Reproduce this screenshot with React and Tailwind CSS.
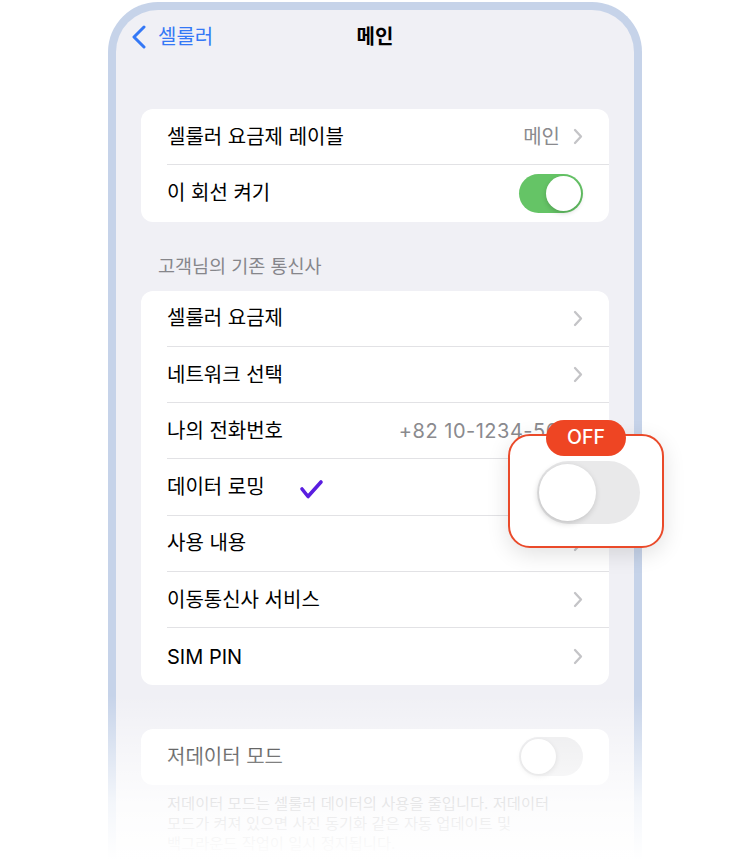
import React from "react";

function Chevron() {
  return (
    <svg width="10" height="17" viewBox="0 0 10 17" className="shrink-0">
      <path d="M2 2 L8 8.5 L2 15" fill="none" stroke="#c4c4c7" strokeWidth="2.3" strokeLinecap="round" strokeLinejoin="round" />
    </svg>
  );
}

function Row({ label, right, last }) {
  return (
    <div className="pl-[26px]">
      <div className={"flex h-[56.3px] items-center justify-between pr-[26px] " + (last ? "" : "border-b border-[#e2e2e5]")}>
        <span className="text-[20px] text-black">{label}</span>
        {right}
      </div>
    </div>
  );
}

function Toggle({ on }) {
  return (
    <div className={"relative h-[39px] w-[64px] rounded-full " + (on ? "bg-[#65c466]" : "bg-[#e9e9eb]")}>
      <div
        className={
          "absolute top-[2px] h-[35px] w-[35px] rounded-full bg-white shadow-[0_2px_5px_rgba(0,0,0,0.18)] " +
          (on ? "right-[2px]" : "left-[2px]")
        }
      />
    </div>
  );
}

export default function App() {
  return (
    <div className="relative h-[860px] w-[750px] overflow-hidden bg-white font-['Inter','Noto_Sans_CJK_KR',sans-serif]">
      {/* phone frame */}
      <div className="ml-[108px] mt-[2px] h-[880px] w-[534px] rounded-t-[50px] border-[8px] border-b-0 border-[#c6d3e9] bg-[#f0f0f5]">
        {/* nav */}
        <div className="relative flex h-[54px] items-center px-[16px]">
          <div className="flex items-center gap-[12px]">
            <svg width="14" height="24" viewBox="0 0 14 24">
              <path d="M12 2 L2 12 L12 22" fill="none" stroke="#3478f6" strokeWidth="3" strokeLinecap="round" strokeLinejoin="round" />
            </svg>
            <span className="text-[20px] text-[#3478f6]">셀룰러</span>
          </div>
          <div className="absolute inset-x-0 top-0 flex h-[54px] items-center justify-center">
            <span className="text-[20px] font-semibold text-black">메인</span>
          </div>
        </div>

        <div className="px-[25px]">
          {/* card 1 */}
          <div className="mt-[45px] overflow-hidden rounded-[12px] bg-white">
            <Row
              label="셀룰러 요금제 레이블"
              right={
                <div className="flex items-center gap-[13px]">
                  <span className="text-[20px] text-[#8a8a8e]">메인</span>
                  <Chevron />
                </div>
              }
            />
            <Row label="이 회선 켜기" right={<Toggle on />} last />
          </div>

          {/* section header */}
          <div className="pl-[17px] pt-[32px] pb-[13px] text-[18.5px] leading-[24px] text-[#86868b]">고객님의 기존 통신사</div>

          {/* card 2 */}
          <div className="overflow-hidden rounded-[12px] bg-white">
            <Row label="셀룰러 요금제" right={<Chevron />} />
            <Row label="네트워크 선택" right={<Chevron />} />
            <Row label="나의 전화번호" right={<span className="text-[20px] tracking-[0.5px] text-[#8a8a8e]">+82 10-1234-5678</span>} />
            <Row label="데이터 로밍" right={<Toggle />} />
            <Row label="사용 내용" right={<Chevron />} />
            <Row label="이동통신사 서비스" right={<Chevron />} />
            <Row label="SIM PIN" right={<Chevron />} last />
          </div>

          {/* card 3 */}
          <div className="mt-[44px] overflow-hidden rounded-[12px] bg-white">
            <Row label="저데이터 모드" right={<Toggle />} last />
          </div>
          <p className="mt-[9px] px-[26px] text-[15.3px] leading-[20px] text-[#86868b]">
            저데이터 모드는 셀룰러 데이터의 사용을 줄입니다. 저데이터
            <br />
            모드가 켜져 있으면 사진 동기화 같은 자동 업데이트 및
            <br />
            백그라운드 작업이 일시 정지됩니다.
          </p>
        </div>
      </div>

      {/* bottom fade */}
      <div className="pointer-events-none absolute inset-x-0 top-[695px] h-[165px] bg-linear-to-b from-white/0 via-white/80 via-65% to-white" />

      {/* check mark */}
      <svg className="absolute left-[299px] top-[479px]" width="25" height="21" viewBox="0 0 25 21">
        <path d="M3 10 L9 17.5 L22 3" fill="none" stroke="#5a1ee0" strokeWidth="3.6" strokeLinecap="round" strokeLinejoin="round" />
      </svg>

      {/* callout */}
      <div className="absolute left-[508px] top-[434px] h-[114px] w-[156px] rounded-[22px] border-2 border-[#ea4a2a] bg-white shadow-[0_6px_22px_rgba(0,0,0,0.12)]">
        <div className="relative ml-[27px] mt-[25px] h-[63px] w-[103px] rounded-full bg-[#e9e9ea]">
          <div className="absolute left-[2px] top-[3px] h-[57px] w-[57px] rounded-full bg-white shadow-[-1px_2px_6px_rgba(0,0,0,0.18)]" />
        </div>
      </div>
      <div className="absolute left-[546px] top-[420px] flex h-[36px] w-[80px] items-center justify-center rounded-full bg-[#ee4523]">
        <span className="text-[19.5px] font-medium text-white">OFF</span>
      </div>
    </div>
  );
}
